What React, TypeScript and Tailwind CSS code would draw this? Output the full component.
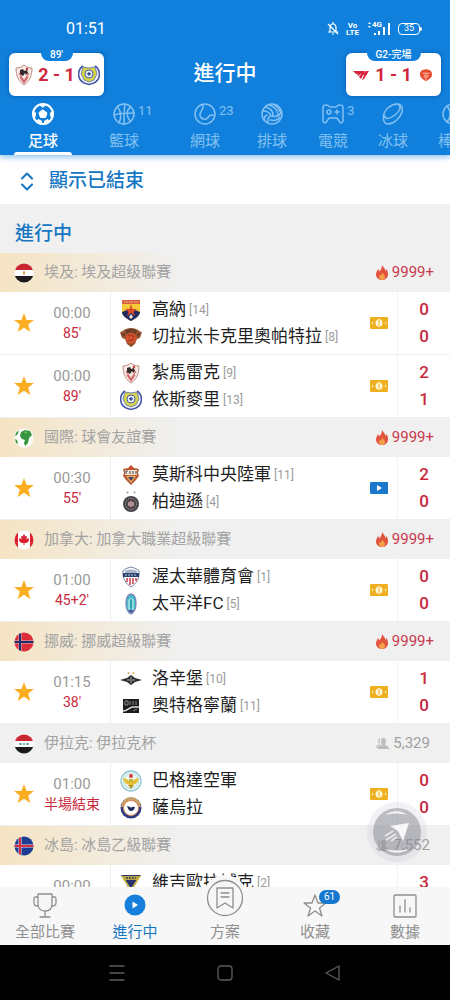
import { useState, type ReactNode } from "react";
import clsx from "clsx";
import { ChevronDown, ChevronUp } from "lucide-react";

type Team = { name: string; rank?: number; crest: ReactNode; score: number };

type Match = {
  id: string;
  kickoff: string;
  live: string;
  home: Team;
  away?: Team;
  media?: "cash" | "video";
  starred: boolean;
};

type League = {
  id: string;
  name: string;
  flag: ReactNode;
  hot: boolean;
  premium: boolean;
  viewers: string;
  matches: Match[];
};

/* ---------- crests ---------- */

const CREST = "size-[22px] shrink-0";

function GounaCrest() {
  return (
    <svg viewBox="0 0 22 22" className={CREST} aria-hidden="true">
      <path d="M2 1h18v12c0 4-5 7-9 9-4-2-9-5-9-9z" fill="#f6c93a" />
      <path d="M2 1h18v4H2z" fill="#d9603a" />
      <path d="M4 3h14" stroke="#f2c9a0" strokeWidth="1.200" strokeDasharray="1.500 1" />
      <path d="M2 13l5-2 4 3 4-3 5 2c0 4-5 7-9 9-4-2-9-5-9-9z" fill="#232a63" />
      <path d="M11 5l1.500 5H17l-3.500 3 1.500 4-4-3-4 3 1.500-4L5 10h4.500z" fill="#dc4a2c" />
      <path d="M9 18l2-3 2 3-2 2z" fill="#f4e5d0" />
    </svg>
  );
}

function CleopatraCrest() {
  return (
    <svg viewBox="0 0 22 22" className={CREST} aria-hidden="true">
      <path d="M0 6c3 0 4-4 11-4s8 4 11 4l-2 6-3 1-2 5-4 3-4-3-2-5-3-1z" fill="#9a5430" />
      <path d="M5 5c2-3 10-3 12 0l-1 3H6z" fill="#6a4128" />
      <path d="M1 7l4 1-1 3zM21 7l-4 1 1 3z" fill="#5f3a25" />
      <circle cx="11" cy="12" r="5.500" fill="#d0512f" />
      <path d="M8 10c2-2 4-1 6 1M8 14c2 1 4 1 6-1" stroke="#a63a24" strokeWidth="1.200" fill="none" />
      <path d="M9 18l2 3 2-3z" fill="#8a4a2c" />
    </svg>
  );
}

function ZamalekCrest() {
  return (
    <svg viewBox="0 0 22 22" className={CREST} aria-hidden="true">
      <path d="M3 4c3 0 6-1 8-3 2 2 5 3 8 3 0 8-3 14-8 17C6 18 3 12 3 4z" fill="#f8ebe7" stroke="#c08a84" />
      <path d="M6 9l5 8 5-8M7 13l4 6 4-6" stroke="#cf6a68" strokeWidth="1.200" fill="none" />
      <path d="M7 6l3-1 1 2 3-1 1 3-2 2-1-2-2 3-3-2z" fill="#35292b" />
      <circle cx="14" cy="5" r="1.200" fill="#c6353b" />
    </svg>
  );
}

function IsmailyCrest() {
  return (
    <svg viewBox="0 0 22 22" className={CREST} aria-hidden="true">
      <path d="M5 2C-1 6-1 15 6 19M17 2c6 4 6 13-1 17" stroke="#4557a4" strokeWidth="1.600" fill="none" />
      <path d="M5 3l6 1 6-1 2 7-3 6-5 2-5-2-3-6z" fill="#d5d447" stroke="#7383b4" />
      <circle cx="11" cy="10" r="4" fill="#eef2fa" stroke="#4c60aa" />
      <path d="M11 8l2 1.500-1 2h-2l-1-2z" fill="#3a4b97" />
      <path d="M6 19l5 1.500L16 19" stroke="#4557a4" strokeWidth="1.600" fill="none" />
    </svg>
  );
}

function CskaCrest() {
  return (
    <svg viewBox="0 0 22 22" className={CREST} aria-hidden="true">
      <path d="M11 1l3 3 5 1-1 4 1 3-3 4-5 5-5-5-3-4 1-3-1-4 5-1z" fill="#b85a34" />
      <path d="M5 6h12v5H5z" fill="#f0e4cf" />
      <path d="M6 10V7h2M10 7v3M13 7v3M16 7v3" stroke="#4a4050" strokeWidth="1" fill="none" />
      <path d="M6 12h10l-5 7z" fill="#e7b56e" />
      <path d="M8 13h6l-3 4z" fill="#4a3f58" />
      <circle cx="11" cy="4" r="1.400" fill="#e43a2e" />
    </svg>
  );
}

function PartizanCrest() {
  return (
    <svg viewBox="0 0 22 22" className={CREST} aria-hidden="true">
      <circle cx="7.500" cy="1.500" r="1" fill="#a8997c" />
      <circle cx="14.500" cy="1.500" r="1" fill="#a8997c" />
      <circle cx="11" cy="13" r="8" fill="#47444a" />
      <circle cx="11" cy="13" r="5.500" fill="none" stroke="#aeabb0" strokeDasharray="1 1" />
      <circle cx="11" cy="13" r="3.500" fill="#6f3c46" />
      <path d="M11 10v6M9 11v4M13 11v4" stroke="#ece7e8" strokeWidth="1" />
    </svg>
  );
}

function OttawaCrest() {
  return (
    <svg viewBox="0 0 22 22" className={CREST} aria-hidden="true">
      <path d="M3 5c3-3 5-3 8-4 3 1 5 1 8 4 1 7-3 13-8 16C6 18 2 12 3 5z" fill="#fff" stroke="#76839e" />
      <path d="M5 5c3-2 9-2 12 0v2H5z" fill="#a9b5ca" />
      <path d="M3 7h16v4H3z" fill="#2c4470" />
      <path d="M5 9h12" stroke="#b8c3d6" strokeWidth="1" strokeDasharray="2 1" />
      <path d="M7 12v4M10 12v7M13 12v6M16 12v3" stroke="#cf4556" strokeWidth="1.600" />
    </svg>
  );
}

function PacificCrest() {
  return (
    <svg viewBox="0 0 22 22" className={CREST} aria-hidden="true">
      <path d="M11 1c4 1 5 4 5 9s-1 9-5 11c-4-2-5-6-5-11s1-8 5-9z" fill="#41bccb" stroke="#7f86b5" strokeWidth="1.300" />
      <path d="M9 17V8c0-3 4-3 4 0v9" stroke="#dff7f8" fill="none" />
      <path d="M11 6v9" stroke="#24888f" />
      <path d="M8 17l3 3 3-3z" fill="#5b4b93" />
    </svg>
  );
}

function RosenborgCrest() {
  return (
    <svg viewBox="0 0 22 22" className={CREST} aria-hidden="true">
      <circle cx="8.500" cy="5" r="1" fill="#dba757" />
      <circle cx="13.500" cy="5" r="1" fill="#dba757" />
      <path d="M0 12l7-2 4-3 4 3 7 2-7 2-4 3-4-3z" fill="#2c2c2e" />
      <path d="M7 12h3M12 12h3M11 9v6" stroke="#aeb0b5" strokeWidth="1" />
    </svg>
  );
}

function OddCrest() {
  return (
    <svg viewBox="0 0 22 22" className={CREST} aria-hidden="true">
      <path d="M3 4h16v14H3z" fill="#1b1b1c" />
      <path d="M5 6v4h3V6zM10 6v4M13 6v4M16 6v4" stroke="#8f8f8f" strokeWidth="1" fill="none" />
      <path d="M3 16c5 0 6-4 10-4h6" stroke="#dcdcdc" strokeWidth="1.500" fill="none" />
      <path d="M13 16l4-2" stroke="#8c8c8c" />
    </svg>
  );
}

function AirForceCrest() {
  return (
    <svg viewBox="0 0 22 22" className={CREST} aria-hidden="true">
      <circle cx="11" cy="11" r="10" fill="#eef7f5" stroke="#8cc6cf" strokeWidth="1.300" />
      <circle cx="11" cy="11" r="7.500" fill="none" stroke="#b6dedf" />
      <path d="M3 8c3 0 5 2 6 3h4c1-1 3-3 6-3-1 5-4 7-8 7s-7-2-8-7z" fill="#e2c034" />
      <path d="M8 15h6l-3 4z" fill="#b29a2a" />
      <circle cx="11" cy="6" r="2" fill="#d53f3a" />
      <path d="M9 9h4v3H9z" fill="#c9b83a" />
    </svg>
  );
}

function ZawraaCrest() {
  return (
    <svg viewBox="0 0 22 22" className={CREST} aria-hidden="true">
      <circle cx="11" cy="11" r="10.500" fill="#2f3c80" />
      <path d="M1 10a10 10 0 0 1 20 0z" fill="#c8a067" />
      <circle cx="11" cy="11" r="7.500" fill="#fff" stroke="#d9855b" />
      <path d="M7 9c2 1 3 0 4 2 1-2 3-1 4-1-1 3-2 4-4 4s-3-2-4-5z" fill="#1f2c63" />
    </svg>
  );
}

function VikingurCrest() {
  return (
    <svg viewBox="0 0 22 22" className={CREST} aria-hidden="true">
      <path d="M1 3h20L11 20z" fill="#26336f" />
      <path d="M3 4h16l-2 4H5z" fill="#b9a63e" />
      <path d="M2 4l9 14 9-14" stroke="#d8bf38" strokeWidth="1.500" fill="none" />
      <path d="M6 6h10" stroke="#3d4467" strokeWidth="1.500" strokeDasharray="2 1" />
      <path d="M8 9h6l-3 7z" fill="#26336f" />
    </svg>
  );
}

function T1Logo() {
  return (
    <svg viewBox="0 0 16 12" className="h-3 w-4 shrink-0" aria-hidden="true">
      <path d="M0 2h11L9 5H7l-1 2-2-1 1-1H3zM6 8l4-6h2L8 10zM10 5l3-3h3l-5 8-2 1 2-5z" fill="#d8243c" />
    </svg>
  );
}

function TesLogo() {
  return (
    <svg viewBox="0 0 14 14" className="h-[14px] w-3 shrink-0" aria-hidden="true">
      <path d="M7 0l2 1c3 0 5 2 5 5 0 4-3 5-5 7l-2 1-2-1C3 11 0 10 0 6c0-3 2-5 5-5z" fill="#e9492f" />
      <path d="M3 5h8M7 5v8M5 7v3M9 7v3" stroke="#f9c0ac" strokeWidth="1.200" />
    </svg>
  );
}

/* ---------- flags ---------- */

function Flag({ id, children }: { id: string; children: ReactNode }) {
  return (
    <svg viewBox="0 0 20 20" className="size-5 shrink-0" aria-hidden="true">
      <clipPath id={`flag-${id}`}>
        <circle cx="10" cy="10" r="9.500" />
      </clipPath>
      <g clipPath={`url(#flag-${id})`}>{children}</g>
    </svg>
  );
}

const flags = {
  egypt: (
    <Flag id="egypt">
      <path fill="#fff" d="M0 0h20v20H0z" />
      <path fill="#c9272f" d="M0 0h20v7H0z" />
      <path fill="#1d1a1c" d="M0 13h20v7H0z" />
      <path fill="#d8b255" d="M8.500 9l1.500-1 1.500 1-1 3h-1z" />
    </Flag>
  ),
  world: (
    <Flag id="world">
      <path fill="#fbfcfb" d="M0 0h20v20H0z" />
      <path fill="#35963f" d="M7 4l4-2 5 1 2 4-2 2-1 1-1 5-3 3-1-3 1-3-3-1-2-3zM2 4l3-1-2 4-2 1zM1 11l2 1 1 4-2-1z" />
      <path fill="#63b45c" d="M11 3l3 1-2 2-2-1z" />
    </Flag>
  ),
  canada: (
    <Flag id="canada">
      <path fill="#fff" d="M0 0h20v20H0z" />
      <path fill="#db2230" d="M0 0h4v20H0zM16 0h4v20h-4zM10 4l1.500 2.500L13 6l-.5 3 2.500-1-.5 2 1 .5-3 2.500h-2v2h-1v-2h-2L4.500 10.500l1-.5L5 8l2.500 1L7 6l1.500.5z" />
    </Flag>
  ),
  norway: (
    <Flag id="norway">
      <path fill="#dc2d3b" d="M0 0h20v20H0z" />
      <path stroke="#e9c3cf" strokeWidth="3" d="M6 0v20M0 10h20" />
      <path stroke="#1d2f6d" strokeWidth="2" d="M6 0v20M0 10h20" />
    </Flag>
  ),
  iraq: (
    <Flag id="iraq">
      <path fill="#fff" d="M0 0h20v20H0z" />
      <path fill="#cb2733" d="M0 0h20v7H0z" />
      <path fill="#1d1a1c" d="M0 13h20v7H0z" />
      <path stroke="#4f9c82" strokeWidth="1.300" d="M5 10h3M9 10h2M12 10h3" />
    </Flag>
  ),
  iceland: (
    <Flag id="iceland">
      <path fill="#1d3d94" d="M0 0h20v20H0z" />
      <path stroke="#e6dcea" strokeWidth="3" d="M6 0v20M0 10h20" />
      <path stroke="#d5303e" strokeWidth="2" d="M6 0v20M0 10h20" />
    </Flag>
  ),
};

/* ---------- small glyphs ---------- */

function FlameIcon() {
  return (
    <svg viewBox="0 0 12 15" className="h-[15px] w-3" aria-hidden="true">
      <path d="M6 0c1 2 3 3 3.500 6 .7-.5.800-1.500.8-2C12 6 12 8 12 9.500 12 13 9 15 6 15s-6-2-6-5.500C0 7 1.500 6 2 4c.7.600 1 1.300 1 2.500C5 5 6 3 6 0z" fill="#e2533d" />
      <path d="M6 7c0 2 3 2.500 3 5 0 2-1.500 3-3 3s-3-1-3-3c0-1 .5-2 1-2.500.3.600.5 1 1 1C5.500 9.500 6 8.500 6 7z" fill="#f7a04a" />
    </svg>
  );
}

function ViewersIcon() {
  return (
    <svg viewBox="0 0 13 13" className="size-[13px]" fill="#bdbdbd" aria-hidden="true">
      <path d="M4 1C2 1 2 3 2 4s.5 2 1 3c-1 1-3 1-3 4h4V8z" opacity=".7" />
      <path d="M7.500 1C9.500 1 10 2.500 10 4s-.8 3-1 3.500c.5 1 4 1 4 4.500H2c0-3.500 3.500-3.500 4-4.500C5.500 7 5 5.500 5 4s.5-3 2.500-3z" />
    </svg>
  );
}

function CashIcon() {
  return (
    <svg viewBox="0 0 18 12" className="h-3 w-[18px]" role="img" aria-label="投注">
      <rect width="18" height="12" rx="1" fill="#eeb01f" />
      <circle cx="9" cy="6" r="3.500" fill="#fff8dc" />
      <path d="M9 2v8" stroke="#fff8dc" strokeWidth="1.500" />
      <path d="M8 4h2M8 6h2M8 8h2" stroke="#eeb01f" strokeWidth="1" />
      <path d="M3 4.500v3L1.500 6zM15 4.500v3L16.500 6z" fill="#fff8dc" />
    </svg>
  );
}

function VideoIcon() {
  return (
    <svg viewBox="0 0 18 12" className="h-3 w-[18px]" role="img" aria-label="直播">
      <rect width="18" height="12" rx="1" fill="#1878c9" />
      <path d="M7 3l5 3-5 3z" fill="#fff" />
    </svg>
  );
}

function StarIcon({ on }: { on: boolean }) {
  return (
    <svg viewBox="0 0 20 20" className="size-5" aria-hidden="true">
      <path
        d="M10 0l2.600 7H20l-5.800 4.600 2.100 7.400L10 14.800 3.700 19l2.100-7.400L0 7h7.400z"
        fill={on ? "#fbae21" : "#e2e2e2"}
      />
    </svg>
  );
}

/* ---------- sport tabs ---------- */

const SPORT = {
  viewBox: "0 0 24 24",
  className: "size-6",
  fill: "none",
  stroke: "currentColor",
  strokeWidth: 1.5,
  strokeLinecap: "round" as const,
  strokeLinejoin: "round" as const,
  "aria-hidden": true,
};

const sports = [
  {
    name: "足球",
    space: "ml-[13px]",
    icon: (
      <svg {...SPORT} strokeWidth={2}>
        <circle cx="12" cy="12" r="10" />
        <path d="M12 8l4 3-1.500 4.500h-5L8 11z" fill="currentColor" strokeWidth="1" />
        <path d="M8.500 2.500h7L12 5zM2.500 9l2 2L4 15l-2-2zM21.500 9l-2 2 .5 4 2-2zM6 20l1-2.500 3.500 1.500-.5 3zM18 20l-1-2.500-3.500 1.500.5 3z" fill="currentColor" strokeWidth="1" />
      </svg>
    ),
  },
  {
    name: "籃球",
    space: "ml-[21px]",
    count: 11,
    icon: (
      <svg {...SPORT}>
        <circle cx="12" cy="12" r="10" />
        <path d="M13 2c-1 6-1 14-1 20M2 13c6-2 14-2 20-2M5 5c4 3 5 10 2 16M19 5c-5 3-5 9-1 14" />
      </svg>
    ),
  },
  {
    name: "網球",
    space: "ml-[21px]",
    count: 23,
    icon: (
      <svg {...SPORT}>
        <circle cx="12" cy="12" r="10" />
        <path d="M9 2.500c4 4-3 6-2 11 1 4 6 5 8 2s3-3 6.500-2" />
      </svg>
    ),
  },
  {
    name: "排球",
    space: "ml-[7px]",
    icon: (
      <svg {...SPORT}>
        <circle cx="12" cy="12" r="10" />
        <path d="M5 5c5 1 8 4 8 8M9 3c5 1 9 5 9 10M3 9c4 0 7 2 8 5M12 14c3 1 7 0 9.500-4M11 14c-3 1-4 4-3 7M7 13c-2 1-3 3-3 5M10 18c4 1 8 0 10-3M14 2.500c3 2 5 4 6 7" />
      </svg>
    ),
  },
  {
    name: "電競",
    space: "ml-px",
    count: 3,
    icon: (
      <svg {...SPORT}>
        <path d="M2 6c0-3 1-3 4-3 2 0 2 2 3 2h6c1 0 1-2 3-2 3 0 4 0 4 3v13c0 2-3 3-4 0l-2-3H8l-2 3c-1 3-4 2-4 0z" />
        <circle cx="8" cy="10" r="2" />
        <path d="M14 10h4M16 8v4" />
      </svg>
    ),
  },
  {
    name: "冰球",
    space: "",
    icon: (
      <svg {...SPORT}>
        <path d="M2.500 14C3 8 10 2 16 2c5 0 6 4 5 8-2 6-8 12-14 12-4 0-5-4-4.500-8z" />
        <path d="M3 13c1 5 6 4 11 0s7-8 3-11" />
      </svg>
    ),
  },
  {
    name: "棒球",
    space: "",
    icon: (
      <svg {...SPORT}>
        <circle cx="12" cy="12" r="10" />
        <path d="M6 4c4 4 4 12 0 16M18 4c-4 4-4 12 0 16" />
      </svg>
    ),
  },
];

/* ---------- data ---------- */

const leagues: League[] = [
  {
    id: "egy",
    name: "埃及: 埃及超级聯賽",
    flag: flags.egypt,
    hot: true,
    premium: true,
    viewers: "9999+",
    matches: [
      {
        id: "egy-1",
        kickoff: "00:00",
        live: "85'",
        home: { name: "高納", rank: 14, crest: <GounaCrest />, score: 0 },
        away: { name: "切拉米卡克里奧帕特拉", rank: 8, crest: <CleopatraCrest />, score: 0 },
        media: "cash",
        starred: true,
      },
      {
        id: "egy-2",
        kickoff: "00:00",
        live: "89'",
        home: { name: "紮馬雷克", rank: 9, crest: <ZamalekCrest />, score: 2 },
        away: { name: "依斯麥里", rank: 13, crest: <IsmailyCrest />, score: 1 },
        media: "cash",
        starred: true,
      },
    ],
  },
  {
    id: "int",
    name: "國際: 球會友誼賽",
    flag: flags.world,
    hot: true,
    premium: true,
    viewers: "9999+",
    matches: [
      {
        id: "int-1",
        kickoff: "00:30",
        live: "55'",
        home: { name: "莫斯科中央陸軍", rank: 11, crest: <CskaCrest />, score: 2 },
        away: { name: "柏迪遜", rank: 4, crest: <PartizanCrest />, score: 0 },
        media: "video",
        starred: true,
      },
    ],
  },
  {
    id: "can",
    name: "加拿大: 加拿大職業超級聯賽",
    flag: flags.canada,
    hot: true,
    premium: true,
    viewers: "9999+",
    matches: [
      {
        id: "can-1",
        kickoff: "01:00",
        live: "45+2'",
        home: { name: "渥太華體育會", rank: 1, crest: <OttawaCrest />, score: 0 },
        away: { name: "太平洋FC", rank: 5, crest: <PacificCrest />, score: 0 },
        media: "cash",
        starred: true,
      },
    ],
  },
  {
    id: "nor",
    name: "挪威: 挪威超級聯賽",
    flag: flags.norway,
    hot: true,
    premium: true,
    viewers: "9999+",
    matches: [
      {
        id: "nor-1",
        kickoff: "01:15",
        live: "38'",
        home: { name: "洛辛堡", rank: 10, crest: <RosenborgCrest />, score: 1 },
        away: { name: "奧特格寧蘭", rank: 11, crest: <OddCrest />, score: 0 },
        media: "cash",
        starred: true,
      },
    ],
  },
  {
    id: "irq",
    name: "伊拉克: 伊拉克杯",
    flag: flags.iraq,
    hot: false,
    premium: false,
    viewers: "5,329",
    matches: [
      {
        id: "irq-1",
        kickoff: "01:00",
        live: "半場結束",
        home: { name: "巴格達空軍", crest: <AirForceCrest />, score: 0 },
        away: { name: "薩烏拉", crest: <ZawraaCrest />, score: 0 },
        media: "cash",
        starred: true,
      },
    ],
  },
  {
    id: "isl",
    name: "冰島: 冰島乙級聯賽",
    flag: flags.iceland,
    hot: false,
    premium: true,
    viewers: "7,552",
    matches: [
      {
        id: "isl-1",
        kickoff: "00:00",
        live: "",
        home: { name: "維吉歐拉域克", rank: 2, crest: <VikingurCrest />, score: 3 },
        starred: false,
      },
    ],
  },
];

/* ---------- sections ---------- */

function StatusBar() {
  return (
    <div className="flex h-[53px] items-center justify-between pt-1 pr-7 pl-[66px] text-white">
      <span className="text-[16px]">01:51</span>
      <div className="flex items-center gap-[7px]">
        <svg viewBox="0 0 12 13" className="h-[13px] w-3" fill="none" stroke="currentColor" strokeWidth="1.200" aria-hidden="true">
          <path d="M1 10h10M3 10V6c0-3 1-4 3-4s3 1 3 4v4M5 12h2M6 0v2M1 2l10 10" />
        </svg>
        <div className="flex flex-col items-center text-[8px] leading-[7px] font-bold">
          <span>Vo</span>
          <span>LTE</span>
        </div>
        <div className="relative h-[14px] w-[25px]">
          <svg viewBox="0 0 25 14" className="h-[14px] w-[25px]" fill="currentColor" aria-hidden="true">
            <path d="M2 2l1.500-2L5 2zM2 4l1.500 2L5 4zM8 11h2v2H8zM12 9h2v4h-2zM17 5h2v8h-2zM22 1h2v12h-2z" />
          </svg>
          <span className="absolute -top-px left-[6px] text-[8px] leading-[8px] font-bold">4G</span>
        </div>
        <div className="flex items-center">
          <span className="flex h-3 w-[22px] items-center justify-center rounded-[4px] border border-white text-[9px] leading-none">
            35
          </span>
          <span className="h-1 w-0.5 rounded-r bg-white" />
        </div>
      </div>
    </div>
  );
}

function PinnedMatch({ tag, wide, left, right, score }: { tag: string; wide?: boolean; left: ReactNode; right: ReactNode; score: string }) {
  return (
    <button
      type="button"
      className="relative flex h-[43px] w-[95px] items-center rounded-md bg-white px-[5px] shadow-[0_0_5px_rgba(0,40,100,0.4)]"
    >
      <span
        className={clsx(
          "absolute -top-[6px] left-1/2 flex h-[14px] -translate-x-1/2 items-center justify-center rounded-b-lg bg-[#1080dc] text-[10px] font-medium text-white",
          wide ? "w-[54px]" : "w-8"
        )}
      >
        {tag}
      </span>
      <span className="flex w-5 justify-center">{left}</span>
      <span className="flex-1 text-center text-[18px] leading-none font-bold whitespace-nowrap text-[#d0263c]">
        {score}
      </span>
      <span className="flex w-5 justify-center">{right}</span>
    </button>
  );
}

function SportTabs() {
  const [active, setActive] = useState("足球");
  return (
    <nav className="flex overflow-hidden pt-[6px]">
      {sports.map((s) => (
        <button
          key={s.name}
          type="button"
          onClick={() => setActive(s.name)}
          className={clsx(
            "flex w-15 shrink-0 flex-col items-center",
            s.space,
            s.name === active ? "font-medium text-white" : "text-[#84c0f1]"
          )}
        >
          <span className="relative">
            {s.icon}
            {s.count && <span className="absolute top-0 left-full ml-0.5 text-[13px] leading-[18px]">{s.count}</span>}
          </span>
          <span className="mt-[5px] text-[15px] leading-[21px]">{s.name}</span>
          <span className={clsx("h-[3px] w-[58px]", s.name === active && "rounded-t bg-white")} />
        </button>
      ))}
    </nav>
  );
}

function TeamLine({ team }: { team: Team }) {
  return (
    <div className="flex h-[27px] items-center">
      {team.crest}
      <span className="ml-[10px] text-[17px] whitespace-nowrap text-[#1f1f1f]">{team.name}</span>
      {team.rank && <span className="ml-[3px] text-[12px] text-[#9b9b9b]">[{team.rank}]</span>}
    </div>
  );
}

function MatchRow({ match }: { match: Match }) {
  const [starred, setStarred] = useState(match.starred);
  return (
    <li className="flex h-[63px] items-stretch border-b border-[#efefef] bg-white">
      <div className="flex w-[111px] shrink-0 items-center border-r border-[#efefef] pl-[14px]">
        <button type="button" aria-label="收藏" aria-pressed={starred} onClick={() => setStarred(!starred)}>
          <StarIcon on={starred} />
        </button>
        <div className="flex flex-1 flex-col items-center whitespace-nowrap">
          <span className="text-[15px] leading-5 text-[#9a9a9a]">{match.kickoff}</span>
          <span className="h-5 text-[14px] leading-5 text-[#c9283d]">{match.live}</span>
        </div>
      </div>
      <div className="min-w-0 flex-1 py-1 pl-[9px]">
        <TeamLine team={match.home} />
        {match.away && <TeamLine team={match.away} />}
      </div>
      <div className="flex w-9 shrink-0 items-center justify-center">
        {match.media === "cash" && <CashIcon />}
        {match.media === "video" && <VideoIcon />}
      </div>
      <div className="w-[53px] shrink-0 border-l border-[#f3f3f3] py-1 text-center text-[17px] leading-[27px] font-medium text-[#c9283d]">
        <div>{match.home.score}</div>
        {match.away && <div>{match.away.score}</div>}
      </div>
    </li>
  );
}

function LeagueBlock({ league }: { league: League }) {
  return (
    <section>
      <h3
        className={clsx(
          "flex h-[39px] items-center bg-[#f0f0f0] pr-4 pl-[14px] text-[15px] font-normal",
          league.premium && "bg-linear-to-r from-[#f5e4c3] to-[#f0f0f0] to-[180px]"
        )}
      >
        {league.flag}
        <span className="ml-[10px] flex-1 text-[#a3a3a3]">{league.name}</span>
        {league.hot ? (
          <span className="flex items-center gap-1 text-[#c9394c]">
            <FlameIcon />
            {league.viewers}
          </span>
        ) : (
          <span className="flex items-center gap-1 pr-1 text-[#9f9f9f]">
            <ViewersIcon />
            {league.viewers}
          </span>
        )}
      </h3>
      <ul>
        {league.matches.map((m) => (
          <MatchRow key={m.id} match={m} />
        ))}
      </ul>
    </section>
  );
}

const THIN = {
  fill: "none",
  stroke: "currentColor",
  strokeWidth: 1.3,
  strokeLinecap: "round" as const,
  strokeLinejoin: "round" as const,
  "aria-hidden": true,
};

function BottomNav() {
  const item = "flex flex-1 flex-col items-center justify-end pb-px";
  return (
    <nav className="relative z-10 flex h-[58px] shrink-0 bg-[#f7f7f7] text-[15px] leading-6 text-[#8f8f8f]">
      <a href="#all" className={item}>
        <svg viewBox="0 0 24 26" className="mb-px h-[26px] w-6" {...THIN}>
          <path d="M5 1h14v10c0 5-3 7-7 7s-7-2-7-7zM5 4H2c-1 0-1 1-1 2v4c0 2 2 3 4 3M19 4h3c1 0 1 1 1 2v4c0 2-2 3-4 3M12 18v6M7 24h10" />
        </svg>
        全部比賽
      </a>
      <a href="#live" className={clsx(item, "text-[#1577c4]")} aria-current="page">
        <svg viewBox="0 0 22 22" className="mb-1 size-[22px]" aria-hidden="true">
          <circle cx="11" cy="11" r="10.500" fill="#157fdb" />
          <path d="M8.500 7.500l5.500 3.500-5.500 3.500z" fill="#fff" />
        </svg>
        進行中
      </a>
      <a href="#plans" className={clsx(item, "relative")}>
        <span className="absolute -top-3 left-1/2 -z-10 size-11 -translate-x-1/2 rounded-full bg-[#f7f7f7]" />
        <svg viewBox="0 0 38 38" className="-mt-5 mb-[3px] size-[38px]" {...THIN}>
          <circle cx="19" cy="19" r="17.500" />
          <path d="M11 9h16v20l-8-5-8 5zM15 14h8M15 18h8" />
        </svg>
        方案
      </a>
      <a href="#favorites" className={item}>
        <span className="relative mb-[2px]">
          <svg viewBox="0 0 24 24" className="size-6" {...THIN}>
            <path d="M12 1l3 8h8l-6.500 5L19 22l-7-5-7 5 2.500-8L1 9h8z" />
          </svg>
          <span className="absolute -top-1 left-4 rounded-full bg-[#1577ce] px-[5px] text-[10px] leading-[14px] text-white">
            61
          </span>
        </span>
        收藏
      </a>
      <a href="#data" className={item}>
        <svg viewBox="0 0 24 24" className="mb-[2px] size-6" {...THIN}>
          <rect x="1" y="1" width="22" height="22" rx="1" />
          <path d="M7 12v6M12 6v12M17 14v4" />
        </svg>
        數據
      </a>
    </nav>
  );
}

function SystemBar() {
  return (
    <div className="flex h-[55px] shrink-0 items-center justify-center gap-[92px] bg-black text-[#5c5c5c]">
      <button type="button" aria-label="選單">
        <svg viewBox="0 0 16 16" className="size-4" {...THIN}>
          <path d="M1 1h14M1 8h14M1 15h14" />
        </svg>
      </button>
      <button type="button" aria-label="主畫面">
        <svg viewBox="0 0 16 16" className="size-4" {...THIN}>
          <rect x="1" y="1" width="14" height="14" rx="3" />
        </svg>
      </button>
      <button type="button" aria-label="返回">
        <svg viewBox="0 0 16 16" className="size-4" {...THIN}>
          <path d="M14 1v14L1 8z" />
        </svg>
      </button>
    </div>
  );
}

export default function App() {
  return (
    <div
      lang="zh-Hant"
      className="flex h-screen flex-col overflow-hidden bg-[#f0f0f0] font-[Roboto,'Noto_Sans_CJK_TC',sans-serif]"
    >
      <header className="relative z-10 shrink-0 bg-[#1080dc] shadow-[0_3px_5px_rgba(16,128,220,0.4)]">
        <StatusBar />
        <div className="flex items-start justify-between px-[9px]">
          <PinnedMatch tag="89'" left={<ZamalekCrest />} right={<IsmailyCrest />} score="2 - 1" />
          <h1 className="pt-1 text-[21px] leading-8 font-medium text-white">進行中</h1>
          <PinnedMatch tag="G2-完場" wide left={<T1Logo />} right={<TesLogo />} score="1 - 1" />
        </div>
        <SportTabs />
      </header>

      <div className="relative flex min-h-0 flex-1 flex-col">
        <main className="min-h-0 flex-1 overflow-y-auto [scrollbar-width:none]">
          <button
            type="button"
            className="flex h-[49px] w-full items-center bg-white pt-1 pl-[17px] text-[19px] font-medium text-[#1577c4]"
          >
            <span className="flex flex-col items-center">
              <ChevronUp size={20} strokeWidth={2.5} />
              <ChevronDown size={20} strokeWidth={2.5} className="-mt-[9px]" />
            </span>
            <span className="ml-3">顯示已結束</span>
          </button>
          <h2 className="flex h-[49px] items-center pt-3 pl-[15px] text-[19px] font-medium text-[#1577c4]">進行中</h2>
          {leagues.map((l) => (
            <LeagueBlock key={l.id} league={l} />
          ))}
        </main>

        <button
          type="button"
          aria-label="分享"
          className="absolute right-[23px] bottom-[25px] size-[60px] rounded-full bg-[#a8a8c0]/15 p-[6px]"
        >
          <svg viewBox="0 0 48 48" className="size-12" aria-hidden="true">
            <circle cx="24" cy="24" r="24" fill="#85878f" opacity=".5" />
            <path d="M12 7c7-5 17-5 22 0-7-2-15-2-22 0zM12 41c7 5 17 5 24 0-8 2-16 2-24 0z" fill="#fff" opacity=".85" />
            <path d="M36 15L17 18l8 5 5 10z" fill="#fff" opacity=".9" />
            <path d="M12 28l8-5M13 32l10-6M18 33l6-4" stroke="#fff" strokeWidth="1.800" opacity=".7" />
          </svg>
        </button>
      </div>

      <BottomNav />
      <SystemBar />
    </div>
  );
}
